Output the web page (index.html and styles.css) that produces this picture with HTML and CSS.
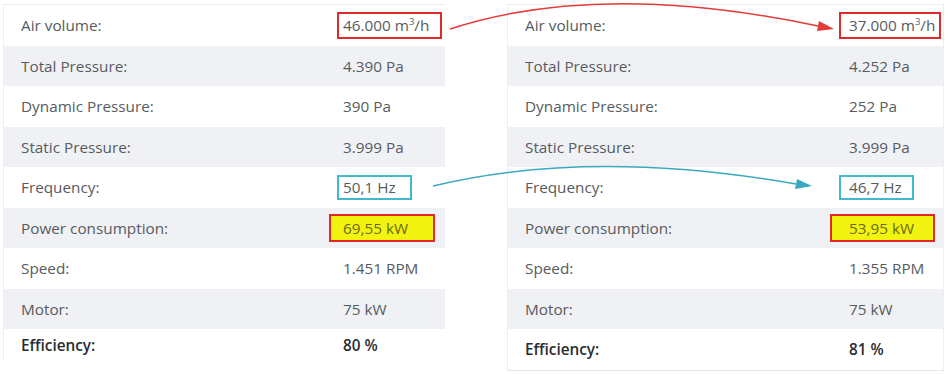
FILE: index.html
```html
<!DOCTYPE html>
<html>
<head>
<meta charset="utf-8">
<link rel="stylesheet" href="styles.css">
</head>
<body>
<div class="page">
  <div class="table table-left">
    <div class="row"><span class="label">Air volume:</span><span class="value"><span class="mark mark-red red-l">46.000 m<sup>3</sup>/h</span></span></div>
    <div class="row alt"><span class="label">Total Pressure:</span><span class="value">4.390 Pa</span></div>
    <div class="row"><span class="label">Dynamic Pressure:</span><span class="value">390 Pa</span></div>
    <div class="row alt"><span class="label">Static Pressure:</span><span class="value">3.999 Pa</span></div>
    <div class="row"><span class="label">Frequency:</span><span class="value"><span class="mark mark-cyan cyan-l">50,1 Hz</span></span></div>
    <div class="row alt"><span class="label">Power consumption:</span><span class="value"><span class="mark mark-yellow yellow-l">69,55 kW</span></span></div>
    <div class="row"><span class="label">Speed:</span><span class="value">1.451 RPM</span></div>
    <div class="row alt"><span class="label">Motor:</span><span class="value">75 kW</span></div>
    <div class="row strong last"><span class="label">Efficiency:</span><span class="value">80 %</span></div>
  </div>
  <div class="table table-right">
    <div class="row"><span class="label">Air volume:</span><span class="value"><span class="mark mark-red red-r">37.000 m<sup>3</sup>/h</span></span></div>
    <div class="row alt"><span class="label">Total Pressure:</span><span class="value">4.252 Pa</span></div>
    <div class="row"><span class="label">Dynamic Pressure:</span><span class="value">252 Pa</span></div>
    <div class="row alt"><span class="label">Static Pressure:</span><span class="value">3.999 Pa</span></div>
    <div class="row"><span class="label">Frequency:</span><span class="value"><span class="mark mark-cyan cyan-r">46,7 Hz</span></span></div>
    <div class="row alt"><span class="label">Power consumption:</span><span class="value"><span class="mark mark-yellow yellow-r">53,95 kW</span></span></div>
    <div class="row"><span class="label">Speed:</span><span class="value">1.355 RPM</span></div>
    <div class="row alt"><span class="label">Motor:</span><span class="value">75 kW</span></div>
    <div class="row strong"><span class="label">Efficiency:</span><span class="value">81 %</span></div>
  </div>
  <svg class="arrows" width="950" height="374" viewBox="0 0 950 374">
    <path d="M450 29 Q 600 -20 818 26" fill="none" stroke="#e53a3a" stroke-width="1.5"/>
    <polygon points="834,29 817,31 819,21" fill="#e53a3a"/>
    <path d="M433 186 Q 590 148 796 184" fill="none" stroke="#3aa9be" stroke-width="1.5"/>
    <polygon points="812,186 795,189 797,179" fill="#3aa9be"/>
  </svg>
</div>
</body>
</html>
```

FILE: styles.css
```css
html, body {
  margin: 0;
  padding: 0;
  background: #ffffff;
}

.page {
  position: relative;
  width: 950px;
  height: 374px;
  display: flex;
  align-items: flex-start;
  gap: 62px;
  padding: 4px 0 0 3px;
  box-sizing: border-box;
  font-family: "Open Sans", "Noto Sans", sans-serif;
  font-size: 15.3px;
  color: #575b60;
}

.table {
  display: flex;
  flex-direction: column;
  border-left: 1px solid #eceef0;
  border-top: 1px solid #eceef0;
}

.table-left {
  width: 441px;
}

.table-left .row {
  grid-template-columns: 1fr 102px;
}

.table-right {
  width: 435px;
  border-bottom: 1px solid #e4e6e9;
  border-right: 1px solid #eceef0;
}

.table-right .row {
  grid-template-columns: 1fr 94px;
}

.row {
  display: grid;
  align-items: center;
  height: 40.5px;
  padding-left: 17px;
  background: #ffffff;
}

.row.alt {
  background: #eff1f4;
}

.row.last {
  height: 31px;
  align-items: start;
  padding-top: 6px;
  box-sizing: border-box;
}

.row.strong {
  font-weight: 600;
  color: #2a2c30;
}

.label {
  white-space: nowrap;
}

.value {
  white-space: nowrap;
}

sup {
  font-size: 9.5px;
  vertical-align: 6px;
  line-height: 0;
}

.mark {
  display: inline-block;
  line-height: 21px;
}

.mark-red {
  border: 2px solid #e02a2a;
  padding-top: 1px;
  padding-bottom: 1px;
}

.red-l {
  padding-left: 4px;
  padding-right: 11px;
  margin-left: -6px;
}

.red-r {
  padding-left: 8px;
  padding-right: 4px;
  margin-left: -10px;
}

.mark-cyan {
  border-width: 2px;
  border-style: solid;
  border-color: #41b8cc;
  padding-top: 0;
  padding-bottom: 0;
}

.cyan-l {
  padding-left: 4px;
  padding-right: 14px;
  margin-left: -6px;
}

.cyan-r {
  padding-left: 8px;
  padding-right: 10px;
  margin-left: -10px;
}

.mark-yellow {
  border: 2px solid #e02a2a;
  background: #f3f311;
  color: #6a6a12;
  padding-top: 2px;
  padding-bottom: 1px;
}

.yellow-l {
  padding-left: 12px;
  padding-right: 25px;
  margin-left: -14px;
}

.yellow-r {
  padding-left: 17px;
  padding-right: 19px;
  margin-left: -19px;
}

.arrows {
  position: absolute;
  left: 0;
  top: 0;
  pointer-events: none;
}
```
